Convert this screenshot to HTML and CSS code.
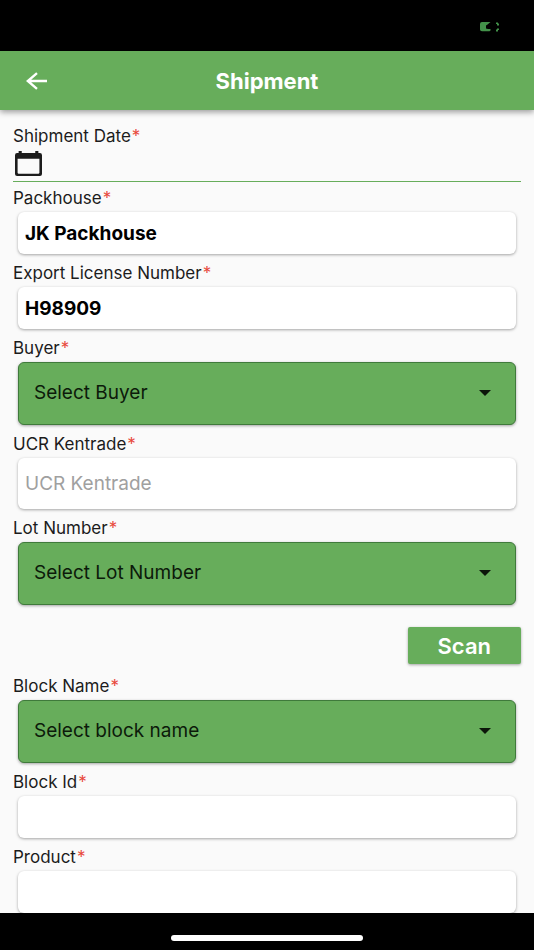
FILE: index.html
```html
<!DOCTYPE html>
<html lang="en">
<head>
<meta charset="utf-8">
<meta name="viewport" content="width=device-width, initial-scale=1">
<title>Shipment</title>
<link rel="stylesheet" href="styles.css">
</head>
<body>
<div class="status-bar">
  <svg class="battery" viewBox="0 0 20 10" aria-hidden="true">
    <path d="M2 0h8.500l-3 2.500-1.500 1v3l2 .5h2.500v1.500l-1 .8H2Q0 9.300 0 7.500V2Q0 0 2 0z"/>
    <path d="M16 .5h2v1.500h-2zM17 1.500h2v2h-2zM17 6.500h2v1.500h-2zM16 7.500h2v2h-2z"/>
  </svg>
</div>
<header class="app-bar">
  <button class="back" type="button" aria-label="Back">
    <svg viewBox="0 0 22 18" aria-hidden="true"><path d="M21 9H2M11 1.200L1.800 9l9.200 7.800"/></svg>
  </button>
  <h1 class="title">Shipment</h1>
</header>
<main class="content">
  <form class="form">
    <div class="field date-field">
      <label class="label" for="date">Shipment Date<span class="required">*</span></label>
      <button class="date" id="date" type="button">
        <svg class="calendar" viewBox="0 0 26 24" aria-hidden="true"><path fill-rule="evenodd" d="M3.500 0h3v2h13V0h3v2H24q2 0 2 2v18q0 2-2 2H2q-2 0-2-2V4q0-2 2-2h1.500zM2.500 7.500V21q0 .8.800.8h19.400q.8 0 .8-.8V7.500z"/></svg>
      </button>
    </div>
    <div class="field">
      <label class="label" for="packhouse">Packhouse<span class="required">*</span></label>
      <input class="control" id="packhouse" type="text" value="JK Packhouse">
    </div>
    <div class="field">
      <label class="label" for="license">Export License Number<span class="required">*</span></label>
      <input class="control" id="license" type="text" value="H98909">
    </div>
    <div class="field">
      <label class="label" for="buyer">Buyer<span class="required">*</span></label>
      <div class="picker">
        <select class="select" id="buyer"><option>Select Buyer</option></select>
        <svg class="caret" viewBox="0 0 12 6" aria-hidden="true"><path d="M0 0h12L6 6z"/></svg>
      </div>
    </div>
    <div class="field">
      <label class="label" for="ucr">UCR Kentrade<span class="required">*</span></label>
      <input class="control tall" id="ucr" type="text" placeholder="UCR Kentrade">
    </div>
    <div class="field">
      <label class="label" for="lot">Lot Number<span class="required">*</span></label>
      <div class="picker">
        <select class="select" id="lot"><option>Select Lot Number</option></select>
        <svg class="caret" viewBox="0 0 12 6" aria-hidden="true"><path d="M0 0h12L6 6z"/></svg>
      </div>
    </div>
    <div class="actions">
      <button class="scan" type="button">Scan</button>
    </div>
    <div class="field">
      <label class="label" for="block">Block Name<span class="required">*</span></label>
      <div class="picker">
        <select class="select" id="block"><option>Select block name</option></select>
        <svg class="caret" viewBox="0 0 12 6" aria-hidden="true"><path d="M0 0h12L6 6z"/></svg>
      </div>
    </div>
    <div class="field">
      <label class="label" for="block-id">Block Id<span class="required">*</span></label>
      <input class="control" id="block-id" type="text">
    </div>
    <div class="field">
      <label class="label" for="product">Product<span class="required">*</span></label>
      <input class="control" id="product" type="text">
    </div>
  </form>
</main>
<footer class="home-bar"><div class="home-indicator"></div></footer>
</body>
</html>
```
FILE: styles.css
```css
* {
  box-sizing: border-box;
}

body {
  margin: 0;
  height: 100vh;
  display: flex;
  flex-direction: column;
  background: #fafafa;
  color: #1c1c1c;
  font-family: Inter, "Liberation Sans", sans-serif;
  font-size: 17px;
}

button,
input,
select {
  font: inherit;
}

.status-bar {
  flex: none;
  height: 51px;
  padding: 2px 34px 0;
  display: flex;
  align-items: center;
  justify-content: flex-end;
  background: #000;
}

.battery {
  width: 20px;
  height: 10px;
  fill: #43924a;
}

.app-bar {
  flex: none;
  height: 59px;
  padding: 0 18px;
  display: grid;
  grid-template-columns: 40px 1fr 40px;
  align-items: center;
  background: #67ad5b;
  box-shadow: 0 2px 6px rgba(0, 0, 0, 0.4);
  z-index: 1;
}

.back {
  height: 40px;
  padding: 0 8px;
  display: flex;
  align-items: center;
  border: 0;
  background: none;
}

.back svg {
  width: 22px;
  height: 18px;
  fill: none;
  stroke: #fff;
  stroke-width: 2.4;
}

.title {
  margin: 0;
  text-align: center;
  color: #fff;
  font-size: 22px;
  line-height: 28px;
  font-weight: 700;
}

.content {
  flex: 1;
  min-height: 0;
  overflow: hidden;
}

.form {
  padding: 16px 13px;
}

.field {
  margin-bottom: 9px;
  display: flex;
  flex-direction: column;
  gap: 4px;
}

.date-field {
  margin-bottom: 6px;
}

.label {
  line-height: 20px;
  white-space: nowrap;
}

.required {
  margin-left: 1px;
  color: #e8483b;
}

.date {
  height: 32px;
  padding: 1px 2px 0;
  display: flex;
  align-items: flex-start;
  border: 0;
  border-bottom: 1px solid #67ad5b;
  background: none;
}

.calendar {
  width: 27px;
  height: 25px;
  fill: #1c1c1c;
}

.control {
  min-width: 0;
  height: 42px;
  margin: 0 5px;
  padding: 0 7px;
  border: 0;
  border-radius: 6px;
  background: #fff;
  box-shadow: 0 1px 3px rgba(0, 0, 0, 0.35);
  color: #000;
  font-size: 19px;
  font-weight: 700;
}

.control.tall {
  height: 51px;
  font-weight: 400;
}

.control::placeholder {
  color: #a0a0a0;
  opacity: 1;
}

.picker {
  position: relative;
  margin: 0 5px;
  display: flex;
}

.select {
  flex: 1;
  min-width: 0;
  height: 63px;
  padding: 0 48px 2px 15px;
  appearance: none;
  border: 1px solid #3f7a3b;
  border-radius: 6px;
  background: #67ad5b;
  box-shadow: 0 1px 3px rgba(0, 0, 0, 0.35);
  color: #0c1a0a;
  font-size: 19px;
}

.caret {
  position: absolute;
  top: 28px;
  right: 25px;
  width: 12px;
  height: 6px;
  fill: #0c160a;
  pointer-events: none;
}

.actions {
  padding: 13px 0 12px;
  display: flex;
  justify-content: flex-end;
}

.scan {
  height: 37px;
  padding: 0 30px;
  border: 0;
  border-radius: 2px;
  background: #67ad5b;
  box-shadow: 0 1px 3px rgba(0, 0, 0, 0.35);
  color: #fff;
  font-size: 22px;
  font-weight: 600;
}

.home-bar {
  flex: none;
  height: 37px;
  padding-top: 13px;
  display: flex;
  align-items: center;
  justify-content: center;
  background: #000;
}

.home-indicator {
  width: 36%;
  height: 6px;
  border-radius: 3px;
  background: #fff;
}
```
